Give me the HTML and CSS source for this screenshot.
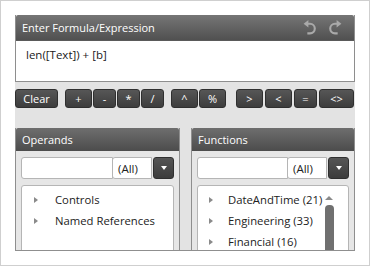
FILE: index.html
```html
<!DOCTYPE html>
<html>
<head>
<meta charset="utf-8">
<link rel="stylesheet" href="styles.css">
</head>
<body>
<div class="window">
  <div class="editor">
    <div class="formula">
      <div class="header">
        <span class="title">Enter Formula/Expression</span>
        <span class="history">
          <svg class="icon" width="16" height="16" viewBox="0 0 15 15"><path d="M5.5 3.5 H7.5 A4.5 4.5 0 0 1 7.5 12.5 H5" fill="none" stroke="#a9a9a9" stroke-width="2"/><path d="M1.5 3.5 L6 0 L6 7 Z" fill="#a9a9a9"/></svg>
          <svg class="icon redo" width="16" height="16" viewBox="0 0 15 15"><path d="M5.5 3.5 H7.5 A4.5 4.5 0 0 1 7.5 12.5 H5" fill="none" stroke="#a9a9a9" stroke-width="2"/><path d="M1.5 3.5 L6 0 L6 7 Z" fill="#a9a9a9"/></svg>
        </span>
      </div>
      <div class="expr">len([Text]) + [b]</div>
    </div>
    <div class="toolbar">
      <div class="group"><button class="btn btn-clear">Clear</button></div>
      <div class="group"><button class="btn btn-w">+</button><button class="btn">-</button><button class="btn">*</button><button class="btn">/</button></div>
      <div class="group"><button class="btn btn-w">^</button><button class="btn btn-w">%</button></div>
      <div class="group last"><button class="btn btn-w">&gt;</button><button class="btn btn-w">&lt;</button><button class="btn">=</button><button class="btn btn-ne">&lt;&gt;</button></div>
    </div>
    <div class="panels">
      <div class="panel">
        <div class="panel-head">Operands</div>
        <div class="panel-body">
          <div class="search">
            <div class="input"></div>
            <div class="combo">(All)</div>
            <div class="drop"><span class="tri"></span></div>
          </div>
          <div class="list">
            <div class="item"><span class="arrow"></span>Controls</div>
            <div class="item"><span class="arrow"></span>Named References</div>
          </div>
        </div>
      </div>
      <div class="panel">
        <div class="panel-head">Functions</div>
        <div class="panel-body">
          <div class="search">
            <div class="input"></div>
            <div class="combo">(All)</div>
            <div class="drop"><span class="tri"></span></div>
          </div>
          <div class="list scroll">
            <div class="rows">
              <div class="item"><span class="arrow"></span>DateAndTime (21)</div>
              <div class="item"><span class="arrow"></span>Engineering (33)</div>
              <div class="item"><span class="arrow"></span>Financial (16)</div>
            </div>
            <div class="scrollbar">
              <span class="up"></span>
              <span class="thumb"></span>
            </div>
          </div>
        </div>
      </div>
    </div>
  </div>
</div>
</body>
</html>
```

FILE: styles.css
```css
* { box-sizing: border-box; }
html, body { margin: 0; padding: 0; background: #fff; }
body { font-family: "Open Sans", "Noto Sans", sans-serif; font-size: 11px; color: #222; }

.window {
  width: 370px; height: 266px;
  border: 1px solid #cfcfcf;
  background: #fff;
  padding: 14px 14px 0 14px;
}
.editor {
  width: 340px; height: 236px;
  background: #e3e3e3;
  border-bottom: 1px solid #8f8f8f;
  overflow: hidden;
}

.formula { border: 1px solid #8e8e8e; border-top: 0; background: #fff; }
.header {
  height: 25px;
  display: flex; align-items: center; justify-content: space-between;
  padding: 0 11px 0 6px;
  background: linear-gradient(#767676, #505050);
  border-radius: 2px 2px 0 0;
  color: #fff;
  font-size: 11px;
}
.history { display: flex; gap: 9px; align-items: center; }
.redo { transform: scaleX(-1); }
.expr { height: 41px; padding: 6px 0 0 10px; font-size: 11.5px; color: #1a1a1a; border-top: 1px solid #5a5a5a; }

.toolbar { display: flex; margin-top: 7px; height: 19px; }
.group { display: flex; gap: 1px; margin-right: 7px; }
.group.last { margin-left: 3px; margin-right: 0; gap: 2px; }
.btn {
  width: 23px; height: 19px; margin: 0; padding: 0;
  font: 11px "Open Sans", sans-serif; color: #fff;
  background: linear-gradient(#565656, #3d3d3d);
  border: 1px solid #2f2f2f; border-radius: 3px;
  line-height: 16px; text-align: center;
}
.btn-w { width: 27px; }
.btn-clear { width: 43px; }
.btn-ne { width: 35px; }

.panels { display: flex; gap: 11px; margin-top: 20px; }
.panel { width: 165px; flex: none; border: 1px solid #8e8e8e; border-top: 0; background: #e6e6e6; height: 140px; }
.panel + .panel { width: 164px; }
.panel-head {
  height: 23px; padding: 4px 0 0 6px;
  background: linear-gradient(#6e6e6e, #4c4c4c);
  border-radius: 2px 2px 0 0;
  color: #fff; font-size: 11px;
}
.panel-body { padding: 6px 5px 0 5px; }
.search { display: flex; height: 22px; }
.input { flex: 1; background: #fff; border: 1px solid #b5b5b5; border-radius: 3px 0 0 3px; }
.combo {
  width: 40px; margin-left: -1px; background: #fff; border: 1px solid #b5b5b5; border-radius: 3px 0 0 3px;
  padding: 3px 0 0 5px; font-size: 11.5px;
}
.drop {
  width: 21px; margin-left: 1px;
  background: linear-gradient(#555, #3c3c3c); border: 1px solid #2f2f2f; border-radius: 3px;
  display: flex; align-items: center; justify-content: center;
}
.tri { width: 0; height: 0; border-left: 3px solid transparent; border-right: 3px solid transparent; border-top: 4px solid #fff; }

.list {
  margin-top: 6px; height: 100px;
  background: #fff; border: 1px solid #b5b5b5; border-radius: 3px;
  padding: 3px 0 0 0;
}
.list.scroll { display: flex; }
.rows { flex: 1; }
.item { height: 21px; display: flex; align-items: center; padding-left: 12px; font-size: 11.3px; color: #222; white-space: nowrap; }
.arrow { width: 0; height: 0; border-top: 3.5px solid transparent; border-bottom: 3.5px solid transparent; border-left: 4px solid #8a8a8a; margin-right: 17px; }
.scroll .item { padding-left: 11px; }
.scroll .arrow { margin-right: 15px; }
.scrollbar { width: 12px; margin-right: 13px; display: flex; flex-direction: column; align-items: center; padding-top: 7px; }
.up { width: 0; height: 0; border-left: 4px solid transparent; border-right: 4px solid transparent; border-bottom: 4px solid #8a8a8a; }
.thumb { width: 9px; flex: 1; margin-top: 5px; background: #707070; border-radius: 4px; }
```
